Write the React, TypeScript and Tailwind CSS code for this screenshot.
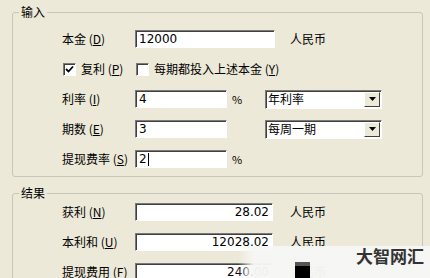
import React from 'react'

const sunken =
  'border border-t-[#7a7a7a] border-l-[#7a7a7a] border-r-white border-b-white shadow-[inset_1px_1px_0_#404040] bg-white'

function Label({ text, k }: { text: string; k: string }) {
  return (
    <span className="w-[73px] shrink-0 whitespace-nowrap">
      {text} (<span className="underline">{k}</span>)
    </span>
  )
}

function TextBox({ value, w, right, caret }: { value: string; w: string; right?: boolean; caret?: boolean }) {
  return (
    <div className={`${sunken} ${w} h-[18px] flex items-center px-[3px] font-['DejaVu_Sans',sans-serif] text-[12px] ${right ? 'justify-end' : ''}`}>
      {value}
      {caret && <span className="inline-block w-px h-[13px] bg-black ml-px" />}
    </div>
  )
}

function Select({ value }: { value: string }) {
  return (
    <div className={`${sunken} w-[117px] h-[19px] flex items-stretch`}>
      <span className="flex-1 pl-[2px] leading-[16px]">{value}</span>
      <span className="w-[16px] m-px bg-[#ece9d8] border border-t-white border-l-white border-r-[#404040] border-b-[#404040] flex items-center justify-center">
        <svg width="7" height="4" viewBox="0 0 7 4">
          <path d="M0 0h7L3.5 4z" fill="#000" />
        </svg>
      </span>
    </div>
  )
}

function Check({ on }: { on?: boolean }) {
  return (
    <span className={`${sunken} w-[13px] h-[13px] shrink-0 flex items-center justify-center`}>
      {on && (
        <svg width="9" height="9" viewBox="0 0 9 9">
          <path d="M1 4l2.5 2.5L8 1.5" stroke="#000" strokeWidth="1.8" fill="none" />
        </svg>
      )}
    </span>
  )
}

export default function App() {
  return (
    <div className="relative w-[430px] h-[278px] overflow-hidden bg-[#ece9d8] pt-[5px] text-[12px] leading-[14px] text-black font-['SimSun','Noto_Sans_CJK_SC',sans-serif]">
      <fieldset className="ml-[12px] w-[411px] border border-[#c8c6b8] rounded-[3px]">
        <legend className="ml-[6px] px-[2px] leading-[14px]">输入</legend>
        <div className="pl-[49px] pt-[11px] pb-[8px] flex flex-col gap-[12px]">
          <div className="flex items-center h-[18px]">
            <Label text="本金" k="D" />
            <TextBox value="12000" w="w-[140px]" />
            <span className="ml-[15px]">人民币</span>
          </div>
          <div className="flex items-center h-[18px]">
            <span className="w-[73px] shrink-0 flex items-center gap-[5px] pl-px">
              <Check on />
              <span className="whitespace-nowrap">
                复利 (<span className="underline">P</span>)
              </span>
            </span>
            <span className="flex items-center gap-[5px] pl-px">
              <Check />
              <span className="whitespace-nowrap">
                每期都投入上述本金 (<span className="underline">Y</span>)
              </span>
            </span>
          </div>
          <div className="flex items-center h-[18px]">
            <Label text="利率" k="I" />
            <TextBox value="4" w="w-[92px]" />
            <span className="w-[38px] pl-[5px] text-[11px]">%</span>
            <Select value="年利率" />
          </div>
          <div className="flex items-center h-[18px]">
            <Label text="期数" k="E" />
            <TextBox value="3" w="w-[92px]" />
            <span className="w-[38px]" />
            <Select value="每周一期" />
          </div>
          <div className="flex items-center h-[18px]">
            <Label text="提现费率" k="S" />
            <TextBox value="2" w="w-[92px]" caret />
            <span className="w-[38px] pl-[5px] text-[11px]">%</span>
          </div>
        </div>
      </fieldset>

      <fieldset className="mt-[9px] ml-[12px] w-[411px] border border-[#c8c6b8] rounded-[3px]">
        <legend className="ml-[6px] px-[2px] leading-[14px]">结果</legend>
        <div className="pl-[49px] pt-[3px] pb-[8px] flex flex-col gap-[12px]">
          <div className="flex items-center h-[18px]">
            <Label text="获利" k="N" />
            <TextBox value="28.02" w="w-[138px]" right />
            <span className="ml-[17px]">人民币</span>
          </div>
          <div className="flex items-center h-[18px]">
            <Label text="本利和" k="U" />
            <TextBox value="12028.02" w="w-[138px]" right />
            <span className="ml-[17px]">人民币</span>
          </div>
          <div className="flex items-center h-[18px]">
            <Label text="提现费用" k="F" />
            <TextBox value="240.00" w="w-[138px]" right />
            <span className="ml-[17px]">人民币</span>
          </div>
        </div>
      </fieldset>

      {/* watermark overlay */}
      <div className="absolute left-[238px] top-[246px] w-[192px] h-[32px] bg-[linear-gradient(90deg,rgba(246,246,244,0),rgba(246,246,244,0.97)_8%,rgba(246,246,244,0.97))]" />
      <div className="absolute left-[295px] top-[262px] w-[15px] h-[16px] bg-black border-t-[4px] border-[#555]" />
      <div className="absolute left-[356px] top-[246px] text-[17px] leading-[20px] font-bold text-[#333] font-['Noto_Sans_CJK_SC',sans-serif]">
        大智网汇
      </div>
    </div>
  )
}
